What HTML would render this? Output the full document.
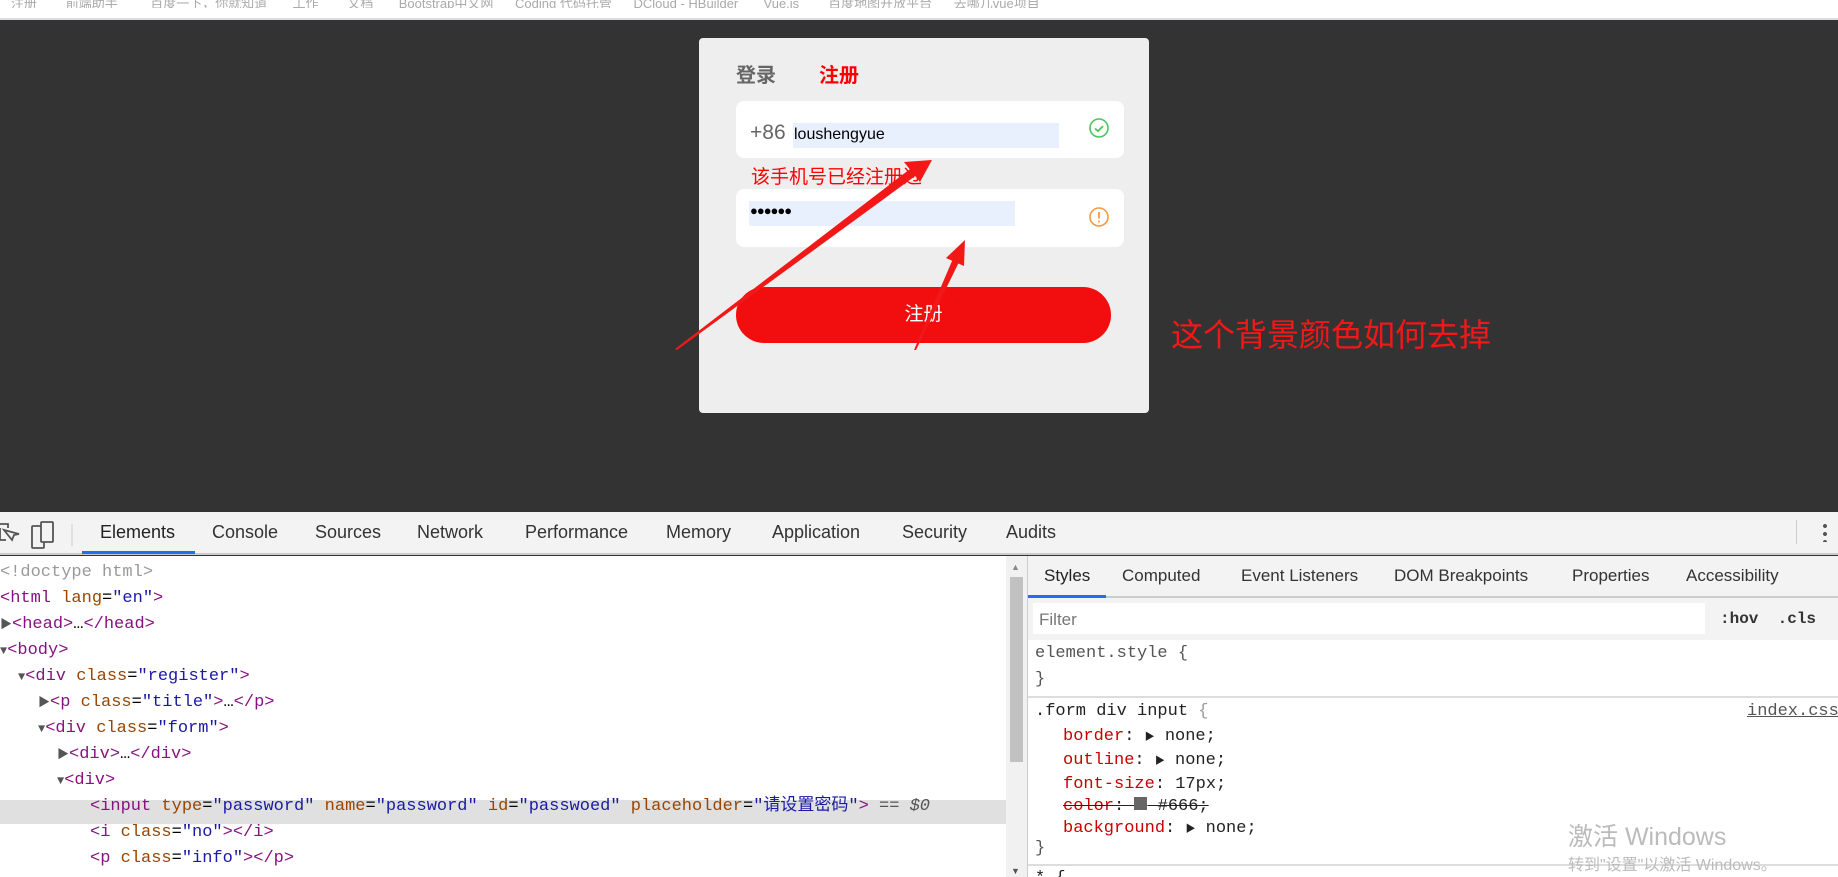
<!DOCTYPE html>
<html style="overflow:hidden;width:1838px;height:877px"><head><meta charset="utf-8"><style>
*{margin:0;padding:0;box-sizing:border-box}
body{width:1838px;height:877px;overflow:hidden;position:relative;background:#333;font-family:"Liberation Sans","Noto Sans CJK SC",sans-serif}
.a{position:absolute;white-space:nowrap}
.mono{font-family:"Liberation Mono","Noto Sans CJK SC",monospace;font-size:17px;line-height:26px}
.tag{color:#881280}.at{color:#994500}.av{color:#1a1aa6}.g{color:#999}
.tab{font-size:18px;color:#333;top:522px}
.st{font-size:17px;color:#333;top:566px}
.p{color:#c80000}
.tri{color:#555;font-size:12px}
</style></head><body>
<div class="a" style="left:0;top:0;width:1838px;height:18px;background:#fff"></div>
<div class="a" style="left:0;top:18px;width:1838px;height:2px;background:#dcdce0"></div>
<div class="a" style="left:0;top:0;font-size:13px;color:#aaa;line-height:8px;height:8px;overflow:hidden;width:1838px">&nbsp;&nbsp;&nbsp;注册&nbsp;&nbsp;&nbsp;&nbsp;&nbsp;&nbsp;&nbsp;&nbsp;前端助手&nbsp;&nbsp;&nbsp;&nbsp;&nbsp;&nbsp;&nbsp;&nbsp;&nbsp;百度一下，你就知道&nbsp;&nbsp;&nbsp;&nbsp;&nbsp;&nbsp;&nbsp;工作&nbsp;&nbsp;&nbsp;&nbsp;&nbsp;&nbsp;&nbsp;&nbsp;文档&nbsp;&nbsp;&nbsp;&nbsp;&nbsp;&nbsp;&nbsp;Bootstrap中文网&nbsp;&nbsp;&nbsp;&nbsp;&nbsp;&nbsp;Coding 代码托管&nbsp;&nbsp;&nbsp;&nbsp;&nbsp;&nbsp;DCloud - HBuilder&nbsp;&nbsp;&nbsp;&nbsp;&nbsp;&nbsp;&nbsp;Vue.js&nbsp;&nbsp;&nbsp;&nbsp;&nbsp;&nbsp;&nbsp;&nbsp;百度地图开放平台&nbsp;&nbsp;&nbsp;&nbsp;&nbsp;&nbsp;去哪儿vue项目</div>

<!-- card -->
<div class="a" style="left:699px;top:38px;width:450px;height:375px;background:#eee;border-radius:4px"></div>
<div class="a" style="left:736px;top:59px;font-size:20px;font-weight:bold;color:#666">登录</div>
<div class="a" style="left:819px;top:59px;font-size:20px;font-weight:bold;color:#f00">注册</div>
<div class="a" style="left:736px;top:101px;width:388px;height:57px;background:#fff;border-radius:8px"></div>
<div class="a" style="left:793px;top:123px;width:266px;height:25px;background:#e8f0fe"></div>
<div class="a" style="left:750px;top:121px;font-size:21px;color:#666">+86</div>
<div class="a" style="left:794px;top:126px;font-size:16px;color:#000">loushengyue</div>
<svg class="a" style="left:1088px;top:117px" width="22" height="22" viewBox="0 0 22 22"><circle cx="11" cy="11" r="9" fill="none" stroke="#4cc45c" stroke-width="1.6"/><path d="M7 11.5l3 2.6 5-5" fill="none" stroke="#4cc45c" stroke-width="1.8"/></svg>
<div class="a" style="left:751px;top:162px;font-size:19px;color:#f00">该手机号已经注册过</div>
<div class="a" style="left:736px;top:189px;width:388px;height:58px;background:#fff;border-radius:8px"></div>
<div class="a" style="left:749px;top:201px;width:266px;height:25px;background:#e8f0fe"></div>
<div class="a" style="left:750px;top:203px;font-size:13px;color:#000;letter-spacing:-1px">●●●●●●</div>
<svg class="a" style="left:1088px;top:206px" width="22" height="22" viewBox="0 0 22 22"><circle cx="11" cy="11" r="9" fill="none" stroke="#f39a3c" stroke-width="1.6"/><path d="M11 6v6.5" stroke="#f39a3c" stroke-width="1.8"/><circle cx="11" cy="15.5" r="1" fill="#f39a3c"/></svg>
<div class="a" style="left:736px;top:287px;width:375px;height:56px;background:#f20e0e;border-radius:28px;color:#fff;font-size:19px;text-align:center;line-height:56px">注册</div>
<div class="a" style="left:1171px;top:310px;font-size:32px;color:#f21818">这个背景颜色如何去掉</div>
<svg class="a" style="left:0;top:0" width="1838" height="512"><g fill="#f21818"><polygon points="675,349 677,350 918,174 914,166"/><polygon points="932,160 904,162 920,182"/><polygon points="914,350 916,350 961,258 955,254"/><polygon points="965,240 946,258 964,266"/></g></svg>

<!-- devtools -->
<div class="a" style="left:0;top:512px;width:1838px;height:43px;background:#f3f3f3;border-bottom:2px solid #ccc"></div>
<svg class="a" style="left:0;top:520px" width="80" height="30"><path d="M-2 4h10v4M0 8v12h6M4 10l8 10 2-5 5-1z" fill="none" stroke="#555" stroke-width="1.8"/><rect x="32" y="6" width="12" height="22" rx="1" fill="none" stroke="#555" stroke-width="1.8"/><rect x="41" y="2" width="12" height="20" rx="1" fill="#f3f3f3" stroke="#555" stroke-width="1.8"/><line x1="72" y1="4" x2="72" y2="26" stroke="#ccc"/></svg>
<div class="a tab" style="left:100px;color:#222">Elements</div>
<div class="a" style="left:82px;top:551px;width:113px;height:3px;background:#1a73e8"></div>
<div class="a tab" style="left:212px">Console</div>
<div class="a tab" style="left:315px">Sources</div>
<div class="a tab" style="left:417px">Network</div>
<div class="a tab" style="left:525px">Performance</div>
<div class="a tab" style="left:666px">Memory</div>
<div class="a tab" style="left:772px">Application</div>
<div class="a tab" style="left:902px">Security</div>
<div class="a tab" style="left:1006px">Audits</div>
<div class="a" style="left:1796px;top:520px;width:1px;height:24px;background:#ccc"></div>
<div class="a" style="left:1823px;top:522px;width:4px;height:20px;background:radial-gradient(circle,#555 1.8px,transparent 2.2px) 0 0/4px 8px"></div>

<div class="a" style="left:0;top:556px;width:1006px;height:321px;background:#fff"></div>
<div class="a" style="left:0;top:800px;width:1006px;height:24px;background:#e0e0e0"></div>
<div class="a" style="left:1006px;top:556px;width:21px;height:321px;background:#f1f1f1"></div>
<div class="a" style="left:1010px;top:577px;width:13px;height:185px;background:#c1c1c1"></div>
<div class="a" style="left:1011px;top:562px;font-size:9px;color:#888">▲</div>
<div class="a" style="left:1011px;top:866px;font-size:9px;color:#555">▼</div>
<div class="a" style="left:1027px;top:556px;width:1px;height:321px;background:#ccc"></div>

<div class="a mono" style="left:0;top:560px;width:1006px;height:317px;overflow:hidden">
<div class="g">&lt;!doctype html&gt;</div>
<div><span class="tag">&lt;html</span> <span class="at">lang</span>=<span class="av">"en"</span><span class="tag">&gt;</span></div>
<div><span class="tri">▶</span><span class="tag">&lt;head&gt;</span>…<span class="tag">&lt;/head&gt;</span></div>
<div><span class="tri">▼</span><span class="tag">&lt;body&gt;</span></div>
<div style="padding-left:18px"><span class="tri">▼</span><span class="tag">&lt;div</span> <span class="at">class</span>=<span class="av">"register"</span><span class="tag">&gt;</span></div>
<div style="padding-left:38px"><span class="tri">▶</span><span class="tag">&lt;p</span> <span class="at">class</span>=<span class="av">"title"</span><span class="tag">&gt;</span>…<span class="tag">&lt;/p&gt;</span></div>
<div style="padding-left:38px"><span class="tri">▼</span><span class="tag">&lt;div</span> <span class="at">class</span>=<span class="av">"form"</span><span class="tag">&gt;</span></div>
<div style="padding-left:57px"><span class="tri">▶</span><span class="tag">&lt;div&gt;</span>…<span class="tag">&lt;/div&gt;</span></div>
<div style="padding-left:57px"><span class="tri">▼</span><span class="tag">&lt;div&gt;</span></div>
<div style="padding-left:90px"><span class="tag">&lt;input</span> <span class="at">type</span>=<span class="av">"password"</span> <span class="at">name</span>=<span class="av">"password"</span> <span class="at">id</span>=<span class="av">"passwoed"</span> <span class="at">placeholder</span>=<span class="av">"请设置密码"</span><span class="tag">&gt;</span> <span style="color:#555">== <i>$0</i></span></div>
<div style="padding-left:90px"><span class="tag">&lt;i</span> <span class="at">class</span>=<span class="av">"no"</span><span class="tag">&gt;&lt;/i&gt;</span></div>
<div style="padding-left:90px"><span class="tag">&lt;p</span> <span class="at">class</span>=<span class="av">"info"</span><span class="tag">&gt;&lt;/p&gt;</span></div>
</div>

<div class="a" style="left:1028px;top:556px;width:810px;height:42px;background:#f3f3f3;border-bottom:2px solid #ccc"></div>
<div class="a st" style="left:1044px;color:#222">Styles</div>
<div class="a" style="left:1028px;top:595px;width:78px;height:3px;background:#1a73e8"></div>
<div class="a st" style="left:1122px">Computed</div>
<div class="a st" style="left:1241px">Event Listeners</div>
<div class="a st" style="left:1394px">DOM Breakpoints</div>
<div class="a st" style="left:1572px">Properties</div>
<div class="a st" style="left:1686px">Accessibility</div>
<div class="a" style="left:1028px;top:598px;width:810px;height:42px;background:#f3f3f3"></div>
<div class="a" style="left:1033px;top:603px;width:672px;height:31px;background:#fff;font-size:17px;color:#777;padding:7px 6px">Filter</div>
<div class="a mono" style="left:1720px;top:606px;font-weight:bold;color:#333;font-size:16px">:hov&nbsp;&nbsp;.cls</div>
<div class="a" style="left:1028px;top:640px;width:810px;height:237px;background:#fff"></div>
<div class="a mono" style="left:1035px;top:641px;line-height:26px;color:#555">element.style {<br>}</div>
<div class="a" style="left:1028px;top:696px;width:810px;height:2px;background:#ddd"></div>
<div class="a mono" style="left:1035px;top:699px;color:#222">.form div input <span class="g">{</span></div>
<div class="a mono" style="left:1747px;top:699px;color:#555;text-decoration:underline">index.css</div>
<div class="a mono" style="left:1063px;top:726px;line-height:22px;color:#222">
<div><span class="p">border</span>: <span style="font-size:10px">▶</span> none;</div>
<div><span class="p">outline</span>: <span style="font-size:10px">▶</span> none;</div>
<div><span class="p">font-size</span>: 17px;</div>
<div style="text-decoration:line-through"><span class="p">color</span>: <span style="display:inline-block;width:13px;height:13px;background:#666"></span> #666;</div>
<div><span class="p">background</span>: <span style="font-size:10px">▶</span> none;</div>
</div>
<div class="a mono" style="left:1035px;top:836px;color:#555">}</div>
<div class="a" style="left:1028px;top:864px;width:810px;height:2px;background:#ddd"></div>
<div class="a mono" style="left:1035px;top:866px;color:#222">* {</div>
<div class="a" style="left:1568px;top:817px;font-size:25px;color:#bbb">激活 Windows</div>
<div class="a" style="left:1568px;top:851px;font-size:16px;color:#bbb">转到"设置"以激活 Windows。</div>
</body></html>
